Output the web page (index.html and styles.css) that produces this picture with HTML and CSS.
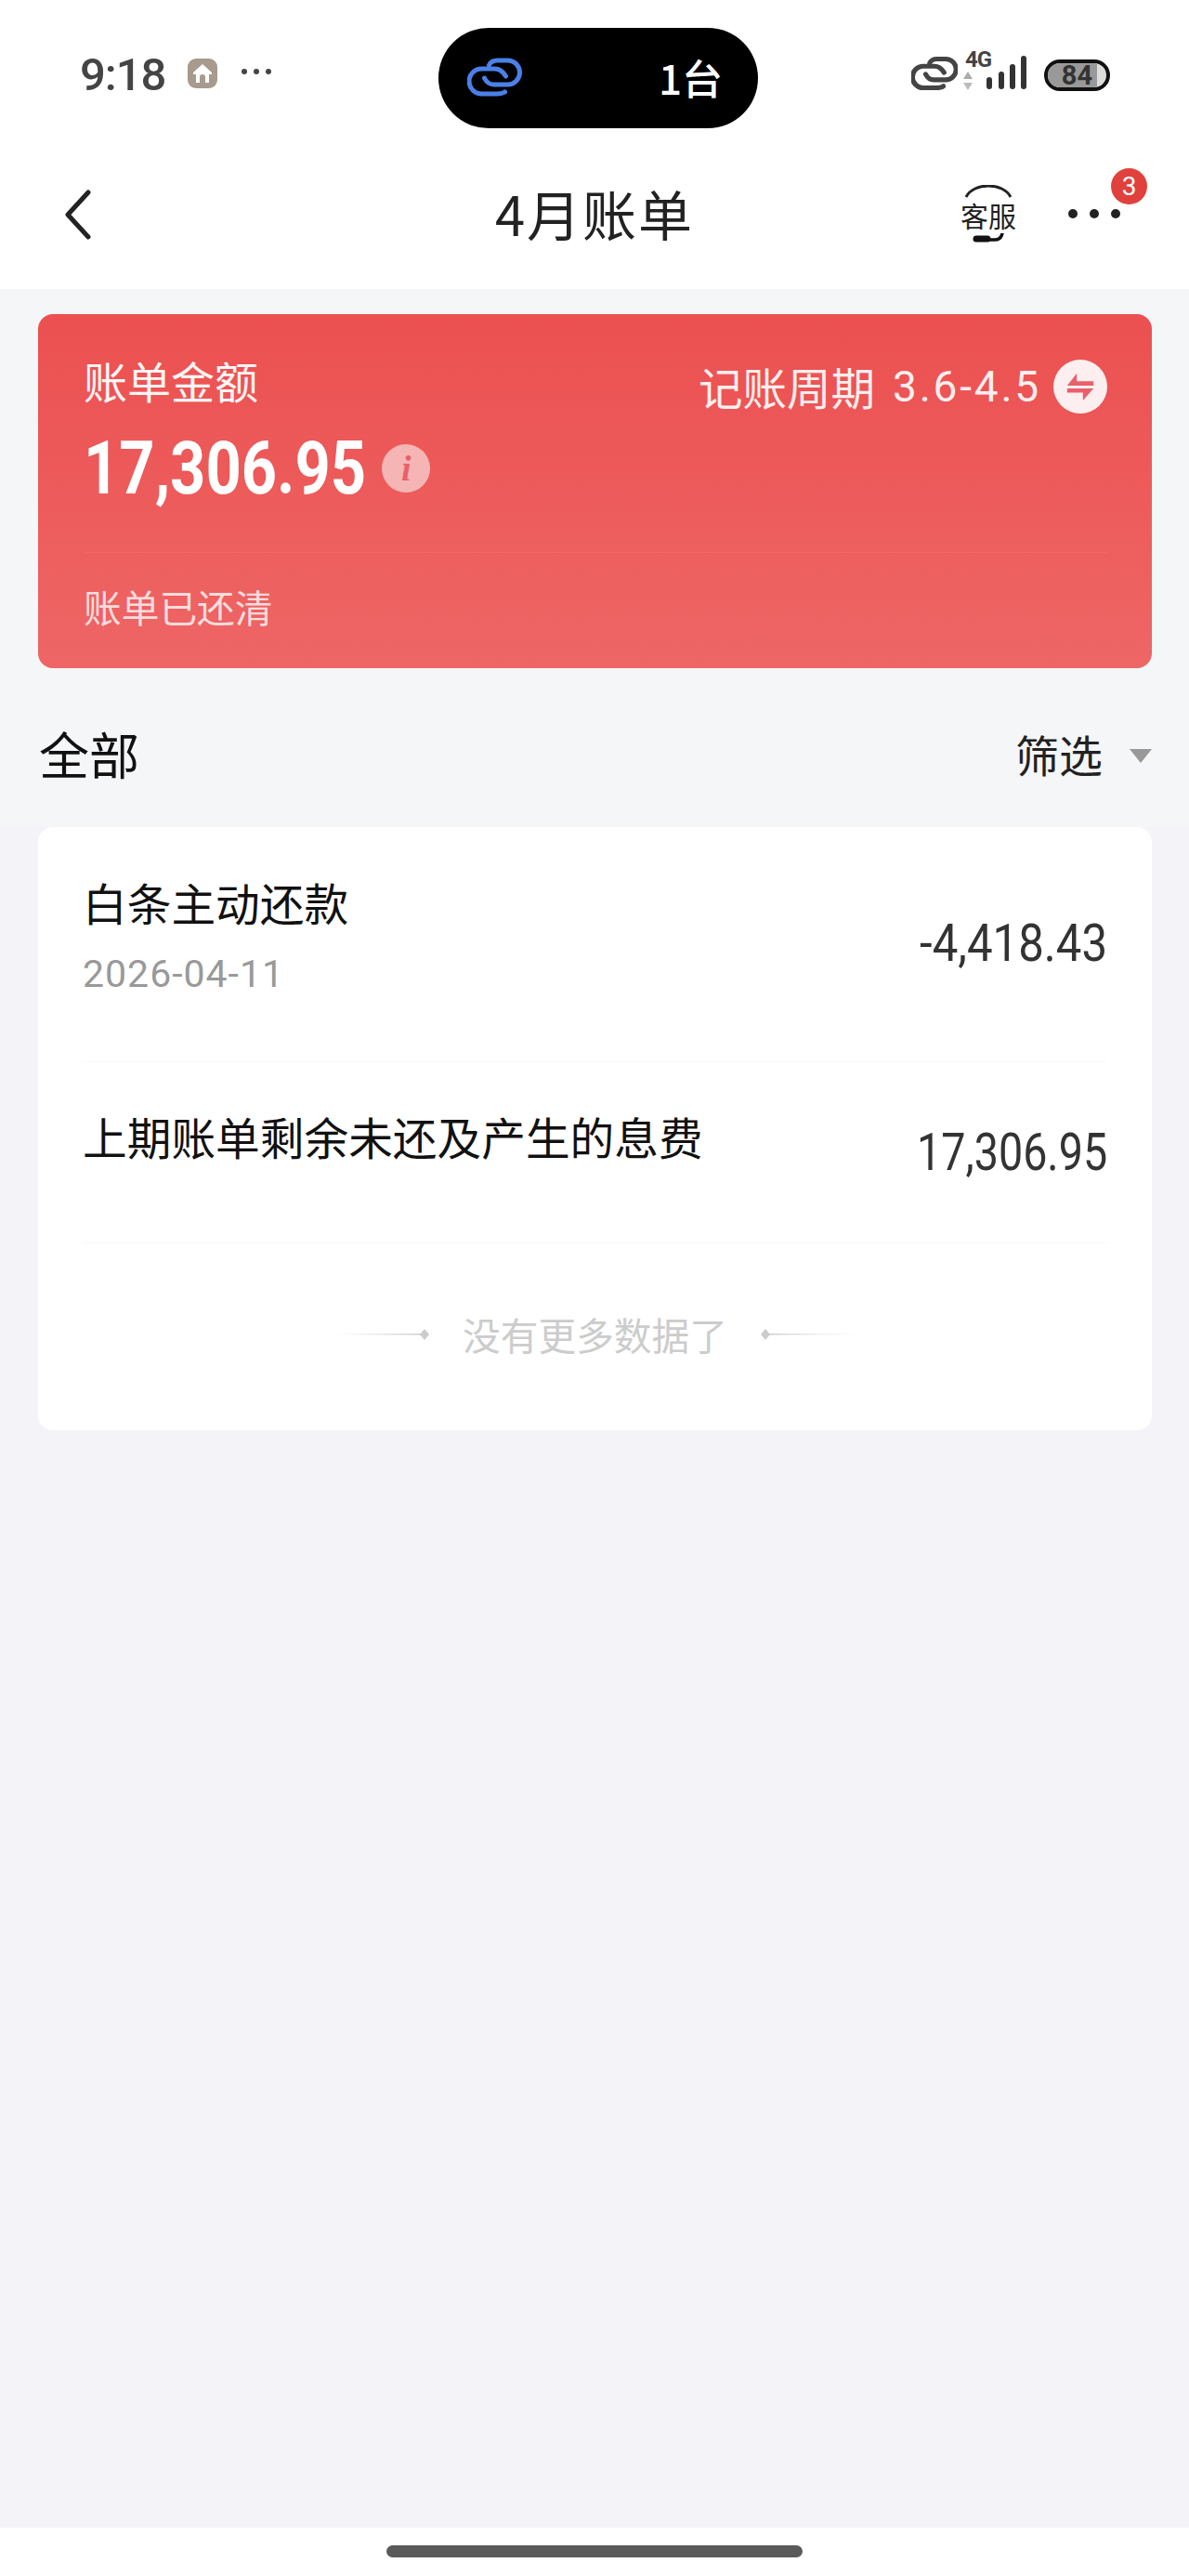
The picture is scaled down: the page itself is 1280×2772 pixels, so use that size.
FILE: index.html
```html
<!DOCTYPE html>
<html lang="zh-CN">
<head>
<meta charset="utf-8">
<title>4月账单</title>
<link rel="stylesheet" href="styles.css">
</head>
<body>
<div class="page">
  <header class="top">
    <div class="status">
      <div class="status-left">
        <span class="clock">9:18</span>
        <span class="home-chip">
          <svg width="22" height="22" viewBox="0 0 22 22"><path d="M11 1 L21 10 V12 H18 V21 H14 V15 A3 3 0 0 0 8 15 V21 H4 V12 H1 V10 Z" fill="#fff"/></svg>
        </span>
        <svg class="status-dots" width="34" height="8" viewBox="0 0 34 8"><circle cx="4" cy="4" r="3" fill="#444"/><circle cx="17" cy="4" r="3" fill="#444"/><circle cx="30" cy="4" r="3" fill="#444"/></svg>
      </div>
      <div class="island">
        <svg width="59" height="44" viewBox="0 0 58 44" fill="none" stroke="#4a80e8" stroke-width="5" stroke-linecap="round"><path d="M23 9C25 5 28 4 32 4H43A13 13 0 0 1 43 30H28C24 30 20 27 18 23"/><path d="M40 38C37 40 34 40 31 40H15A13.5 13.5 0 0 1 15 13H29C34 13 38 16 41 21"/></svg>
        <span class="island-text">1台</span>
      </div>
      <div class="status-right">
        <svg class="status-link" width="50" height="38" viewBox="0 0 58 44" fill="none" stroke="#444" stroke-width="6" stroke-linecap="round"><path d="M23 9C25 5 28 4 32 4H43A13 13 0 0 1 43 30H28C24 30 20 27 18 23"/><path d="M40 38C37 40 34 40 31 40H15A13.5 13.5 0 0 1 15 13H29C34 13 38 16 41 21"/></svg>
        <div class="net">
          <span class="net-label">4G</span>
          <svg class="net-arrows" width="12" height="22" viewBox="0 0 12 22"><path d="M6 1 L11 9 H1 Z" fill="#aaa"/><path d="M6 21 L11 13 H1 Z" fill="#bbb"/></svg>
        </div>
        <svg class="signal" width="44" height="38" viewBox="0 0 44 38"><rect x="0" y="23" width="6" height="13" rx="3" fill="#333"/><rect x="13" y="17" width="6" height="19" rx="3" fill="#333"/><rect x="25" y="9" width="6" height="27" rx="3" fill="#333"/><rect x="37" y="0" width="6" height="36" rx="3" fill="#333"/></svg>
        <div class="battery"><span class="battery-fill"></span><span class="battery-num">84</span></div>
      </div>
    </div>
    <nav class="nav">
      <svg class="back" width="28" height="54" viewBox="0 0 28 54" fill="none" stroke="#222" stroke-width="5" stroke-linecap="round" stroke-linejoin="round"><path d="M25 3 L3 27 L25 51"/></svg>
      <h1 class="title">4月账单</h1>
      <div class="nav-actions">
        <div class="service">
          <svg class="service-arc" width="52" height="14" viewBox="0 0 52 14" fill="none" stroke="#222" stroke-width="3"><path d="M2 13 C10 -3 42 -3 50 13"/></svg>
          <span class="service-text">客服</span>
          <svg class="service-mic" width="34" height="10" viewBox="0 0 34 10" fill="none"><path d="M4 6 H16" stroke="#111" stroke-width="7" stroke-linecap="round"/><path d="M16 7 H24 C28 7 31 5 32 0" stroke="#111" stroke-width="3.5" stroke-linecap="round"/></svg>
        </div>
        <div class="more">
          <svg width="58" height="12" viewBox="0 0 58 12"><circle cx="6" cy="6" r="5" fill="#222"/><circle cx="29" cy="6" r="5" fill="#222"/><circle cx="52" cy="6" r="5" fill="#222"/></svg>
          <span class="badge">3</span>
        </div>
      </div>
    </nav>
  </header>

  <main class="content">
    <section class="bill">
      <div class="bill-main">
        <div class="bill-left">
          <div class="bill-label">账单金额</div>
          <div class="bill-amount-row">
            <span class="bill-amount">17,306.95</span>
            <span class="info">i</span>
          </div>
        </div>
        <div class="bill-cycle">
          <span class="cycle-text">记账周期</span>
          <span class="cycle-range">3.6-4.5</span>
          <span class="swap">
            <svg width="34" height="34" viewBox="0 0 36 36" fill="#e8616a"><path d="M14 3 V12 H33 V17 H3 Z"/><path d="M3 20 H33 L21 34 V25 H3 Z"/></svg>
          </span>
        </div>
      </div>
      <div class="bill-foot">账单已还清</div>
    </section>

    <div class="filter-row">
      <span class="filter-all">全部</span>
      <span class="filter-btn">筛选<i class="caret"></i></span>
    </div>

    <section class="list">
      <div class="row row-first">
        <div class="row-info">
          <div class="row-name">白条主动还款</div>
          <div class="row-date">2026-04-11</div>
        </div>
        <div class="row-amount row-amount-first">-4,418.43</div>
      </div>
      <div class="row row-second">
        <div class="row-name">上期账单剩余未还及产生的息费</div>
        <div class="row-amount row-amount-low">17,306.95</div>
      </div>
      <div class="end">
        <svg class="end-line" width="104" height="14" viewBox="0 0 104 14"><defs><linearGradient id="la" x1="0" x2="1" y1="0" y2="0"><stop offset="0" stop-color="#ddd" stop-opacity="0"/><stop offset="1" stop-color="#ccc"/></linearGradient></defs><rect x="0" y="6" width="96" height="1.5" fill="url(#la)"/><path d="M98 1 L103 7 L98 13 L93 7 Z" fill="#ccc"/></svg>
        <span class="end-text">没有更多数据了</span>
        <svg class="end-line" width="104" height="14" viewBox="0 0 104 14"><defs><linearGradient id="lb" x1="1" x2="0" y1="0" y2="0"><stop offset="0" stop-color="#ddd" stop-opacity="0"/><stop offset="1" stop-color="#ccc"/></linearGradient></defs><rect x="8" y="6" width="96" height="1.5" fill="url(#lb)"/><path d="M6 1 L11 7 L6 13 L1 7 Z" fill="#ccc"/></svg>
      </div>
    </section>
  </main>

  <footer class="home-bar"><span class="home-pill"></span></footer>
</div>
</body>
</html>
```

FILE: styles.css
```css
* { box-sizing: border-box; margin: 0; padding: 0; }
html, body { background: #f3f3f8; }
body { font-family: "Noto Sans CJK SC", "Noto Sans", sans-serif; }
.page { width: 1280px; height: 2772px; display: flex; flex-direction: column; }

.top { background: #fff; height: 311px; flex: none; }
.status { height: 168px; padding: 30px 78px 0 86px; display: grid; grid-template-columns: 1fr 344px 1fr; align-items: start; }
.status-left { display: flex; align-items: center; height: 100px; }
.clock { font-family: Roboto, sans-serif; font-size: 49px; font-weight: 500; color: #444; letter-spacing: -1px; width: 116px; }
.home-chip { width: 32px; height: 32px; border-radius: 9px; background: #a89a8c; display: flex; align-items: center; justify-content: center; margin-top: -3px; }
.status-dots { margin-left: 25px; margin-top: -6px; }
.island { height: 108px; background: #000; border-radius: 54px; display: flex; align-items: center; justify-content: space-between; padding: 0 38px 0 31px; }
.island svg { margin-top: -2px; }
.island-text { font-size: 44px; font-weight: 500; color: #fff; line-height: 1; margin-top: -2px; }
.status-right { display: flex; justify-content: flex-end; align-items: flex-end; height: 68px; margin-right: 7px; }
.status-link { margin-right: -4px; }
.net { display: flex; flex-direction: column; align-items: center; width: 36px; margin-left: 6px; }
.net-label { font-family: Roboto, sans-serif; font-size: 24px; font-weight: 700; color: #444; line-height: 20px; letter-spacing: -1px; margin-left: 4px; }
.net-arrows { margin: 2px 0 0 -18px; }
.signal { margin-left: -7px; }
.battery { position: relative; width: 71px; height: 34px; border: 4px solid #111; border-radius: 17px; margin-left: 18px; overflow: hidden; display: flex; align-items: center; justify-content: center; background: #ddd; }
.battery-fill { position: absolute; left: 0; top: 0; bottom: 0; width: 84%; background: #999; }
.battery-num { position: relative; font-family: Roboto, sans-serif; font-weight: 700; font-size: 29px; line-height: 1; color: #333; }

.nav { height: 143px; padding: 0 71px 0 70px; position: relative; display: flex; align-items: center; justify-content: space-between; }
.back { margin-top: -18px; }
.title { position: absolute; left: 0; right: 0; top: 25px; text-align: center; font-size: 58px; font-weight: 400; color: #222; line-height: 72px; letter-spacing: 2px; }
.nav-actions { display: flex; align-items: center; margin-top: -19px; }
.service { display: flex; flex-direction: column; align-items: center; width: 60px; }
.service-arc { display: block; }
.service-text { font-size: 30px; line-height: 34px; color: #222; margin-top: 1px; }
.service-mic { display: block; margin-top: 3px; }
.more { position: relative; margin-left: 55px; width: 60px; }
.more svg { display: block; }
.badge { position: absolute; left: 47px; top: -43px; width: 39px; height: 39px; border-radius: 50%; background: #e0413d; color: #fff; font-family: Roboto, sans-serif; font-size: 28px; line-height: 39px; text-align: center; }

.content { flex: 1; padding: 27px 40px 0 41px; background: linear-gradient(#f5f6f8 0, #f5f6f8 579px, #f3f3f8 579px); }
.bill { height: 381px; border-radius: 16px; background: linear-gradient(#ec5050, #ee6666); color: #fff; padding: 0 48px 0 49px; display: flex; flex-direction: column; }
.bill-main { height: 257px; display: flex; justify-content: space-between; border-bottom: 1px solid rgba(255,255,255,.06); }
.bill-left { padding-top: 37px; }
.bill-label { font-size: 47px; line-height: 68px; color: #fff5f5; }
.bill-amount-row { display: flex; align-items: center; margin-top: 19px; }
.bill-amount { font-family: Roboto, sans-serif; font-weight: 700; font-size: 80px; line-height: 84px; transform: scaleX(.835); transform-origin: left center; margin-right: -60px; }
.info { width: 52px; height: 52px; border-radius: 50%; background: #f5b5b5; color: #e8616a; font-family: "Liberation Serif", serif; font-style: italic; font-weight: 700; font-size: 38px; line-height: 52px; text-align: center; margin-left: 17px; }
.bill-cycle { display: flex; align-items: center; height: 60px; margin-top: 48px; color: #fdeeee; }
.cycle-text { font-size: 47.5px; line-height: 60px; }
.cycle-range { font-family: Roboto, sans-serif; font-size: 46px; margin-left: 19px; letter-spacing: 2.8px; }
.swap { width: 58px; height: 58px; border-radius: 50%; background: #fdeff0; margin-left: 13px; display: flex; align-items: center; justify-content: center; }
.bill-foot { font-size: 40.7px; line-height: 56px; color: #fbdcdc; padding-top: 30px; }

.filter-row { height: 171px; display: flex; justify-content: space-between; align-items: center; padding: 13px 0 0 1px; }
.filter-all { font-size: 54px; line-height: 70px; color: #111; }
.filter-btn { display: flex; align-items: center; font-size: 47px; line-height: 60px; color: #222; }
.caret { width: 0; height: 0; margin-left: 29px; border-left: 12px solid transparent; border-right: 12px solid transparent; border-top: 15px solid #999; margin-top: 4px; }

.list { height: 649px; background: #fff; border-radius: 16px; padding: 0 48px 0 48px; }
.row { display: flex; justify-content: space-between; border-bottom: 1px solid #f9f9fa; }
.row-first { height: 253px; padding-top: 48px; align-items: flex-start; }
.row-second { height: 195px; padding-top: 47px; align-items: flex-start; }
.row-name { font-size: 47.7px; line-height: 66px; color: #111; }
.row-date { font-family: Roboto, sans-serif; font-size: 41px; line-height: 56px; color: #999; margin-top: 16px; letter-spacing: 1px; }
.row-amount { font-family: Roboto, sans-serif; font-weight: 400; font-size: 56px; line-height: 64px; color: #333; margin-top: 45px; transform: scaleX(.833); transform-origin: right center; }
.row-amount-first { transform: scaleX(.878); }
.row-amount-low { margin-top: 18px; }
.end { display: flex; align-items: center; justify-content: center; gap: 35px; height: 196px; }
.end-text { font-size: 40.7px; line-height: 56px; color: #ccc; }

.home-bar { height: 52px; flex: none; background: #fff; display: flex; justify-content: center; padding-top: 19px; }
.home-pill { width: 448px; height: 13px; border-radius: 7px; background: #5a5a5a; }
```
